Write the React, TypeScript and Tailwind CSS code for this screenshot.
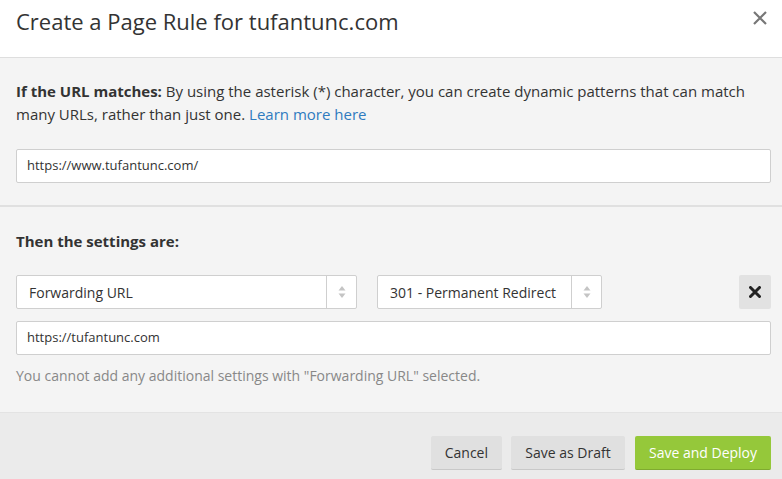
import React from 'react';

function Arrows() {
  return (
    <svg width="8" height="14" viewBox="0 0 8 14" className="text-[#c4c4c4]">
      <path d="M4 1 L7.5 5.5 H0.5 Z" fill="currentColor" />
      <path d="M4 13 L7.5 8.5 H0.5 Z" fill="currentColor" />
    </svg>
  );
}

function Select({ label, width }: { label: string; width: string }) {
  return (
    <div className={`${width} h-[34px] flex bg-white border border-[#cfcfcf] rounded-[2px]`}>
      <div className="flex-1 flex items-center px-3 text-[14px] whitespace-nowrap text-[#333]">{label}</div>
      <div className="w-[30px] border-l border-[#cfcfcf] flex items-center justify-center">
        <Arrows />
      </div>
    </div>
  );
}

export default function App() {
  return (
    <div className="w-[782px] h-[479px] bg-white flex flex-col text-[#333]" style={{ fontFamily: '"Open Sans", sans-serif' }}>
      <div className="h-[58px] flex items-center justify-between pl-4 pr-[14px] border-b border-[#dedede] shrink-0">
        <h1 className="text-[22px] leading-none -mt-[16px] text-[#333]">Create a Page Rule for tufantunc.com</h1>
        <svg width="16" height="16" viewBox="0 0 16 16" className="-mt-[22px]">
          <path d="M2 2 L14 14 M14 2 L2 14" stroke="#777" strokeWidth="2.2" />
        </svg>
      </div>

      <div className="bg-[#f4f4f4] pl-4 pr-[11px] pt-[22px] pb-[22px] border-b-2 border-[#e0e0e0]">
        <p className="text-[15px] leading-[23px]">
          <b>If the URL matches:</b> By using the asterisk (*) character, you can create dynamic patterns that can match many URLs, rather than just one.{' '}
          <a className="text-[#2f7bbf]">Learn more here</a>
        </p>
        <div className="mt-[23px] h-[34px] bg-white border border-[#cfcfcf] rounded-[2px] flex items-center px-[10px] text-[13px]">
          https://www.tufantunc.com/
        </div>
      </div>

      <div className="bg-[#f4f4f4] pl-4 pr-[11px] pt-[23px] pb-[25px] border-b border-[#e3e3e3]">
        <p className="text-[15px] font-bold leading-[23px]">Then the settings are:</p>
        <div className="mt-[22px] flex items-center">
          <Select label="Forwarding URL" width="w-[341px]" />
          <div className="w-[20px]" />
          <Select label="301 - Permanent Redirect" width="w-[225px]" />
          <div className="flex-1" />
          <div className="w-[32px] h-[34px] bg-[#e2e2e2] rounded-[2px] flex items-center justify-center">
            <svg width="12" height="12" viewBox="0 0 12 12">
              <path d="M1.5 1.5 L10.5 10.5 M10.5 1.5 L1.5 10.5" stroke="#222" strokeWidth="3" strokeLinecap="round" />
            </svg>
          </div>
        </div>
        <div className="mt-[12px] h-[34px] bg-white border border-[#cfcfcf] rounded-[2px] flex items-center px-[10px] text-[13px]">
          https://tufantunc.com
        </div>
        <p className="mt-[10px] text-[14px] text-[#888] leading-[22px]">
          You cannot add any additional settings with "Forwarding URL" selected.
        </p>
      </div>

      <div className="flex-1 bg-[#ebebeb] flex items-start justify-end gap-[9px] pt-[23px] pr-[11px]">
        <button className="h-[34px] px-[14px] bg-[#e0e0e0] border-b border-[#c8c8c8] rounded-[2px] text-[14px] text-[#333]">Cancel</button>
        <button className="h-[34px] w-[114px] bg-[#e0e0e0] border-b border-[#c8c8c8] rounded-[2px] text-[14px] text-[#333]">Save as Draft</button>
        <button className="ml-[1px] h-[34px] w-[136px] bg-[#95c83a] border-b border-[#7faa30] rounded-[2px] text-[14px] text-white">Save and Deploy</button>
      </div>
    </div>
  );
}
